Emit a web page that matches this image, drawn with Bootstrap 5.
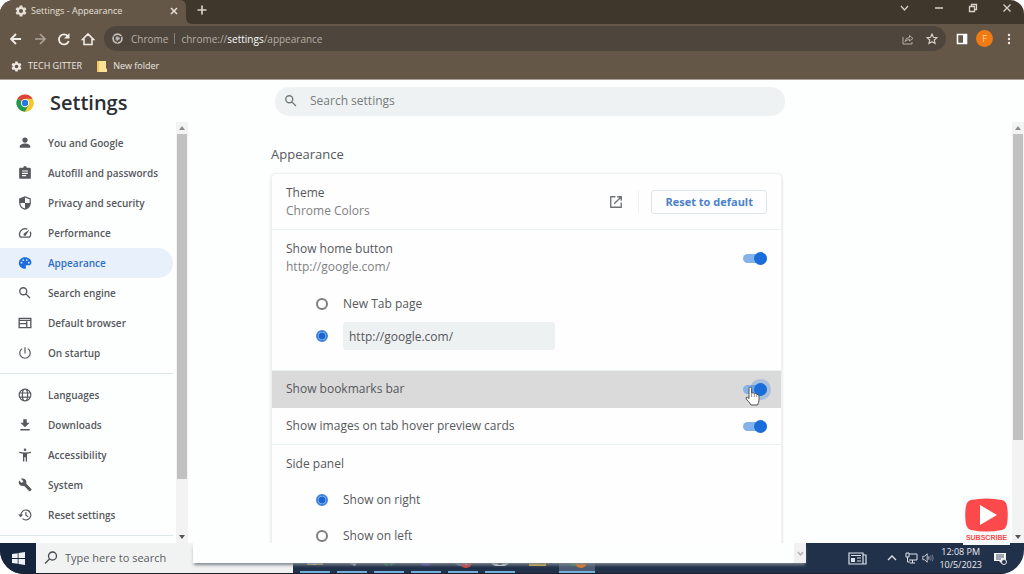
<!DOCTYPE html>
<html lang="en">
<head>
<meta charset="utf-8">
<meta name="viewport" content="width=device-width, initial-scale=1">
<title>Settings - Appearance</title>
<link href="https://cdn.jsdelivr.net/npm/bootstrap@5.3.0/dist/css/bootstrap.min.css" rel="stylesheet">
<style>
  body { font-family: "Open Sans", "Noto Sans", sans-serif; font-size: 12px; line-height: 18px; color: #55585c; background: #fff; }
  button { border: 0; background: none; padding: 0; color: inherit; line-height: 1; }
  svg { display: block; flex: none; }
  .screen { height: 100vh; border-radius: 14px 14px 24px 24px; background: #fdfefe; }

  /* Browser frame */
  .tabstrip { height: 24px; background: #40372c; color: #d8d2ca; }
  .tab { width: 186px; background: #655748; border-radius: 0 6px 0 0; padding: 0 8px 2px 15px; font-size: 9px; color: #e6e0d8; }
  .tab-edge { width: 6px; background: #655748; }
  .tab-edge::before { content: ""; display: block; height: 100%; background: #40372c; border-radius: 0 0 0 6px; }
  .window-buttons { gap: 24px; padding-right: 12px; }
  .toolbar { height: 31px; background: #655748; color: #efebe5; padding: 0 13px 2px 8px; }
  .address { height: 25px; background: #4e463c; border-radius: 13px; padding: 0 8px; font-size: 10px; color: #b5aea4; }
  .address-rule { width: 1px; height: 11px; background: #887e71; margin: 0 6px; }
  .share { margin-right: 12px; }
  .panel-toggle { margin-left: 10px; }
  .kebab { margin-left: 14px; }
  .bookmarks { height: 25px; background: #655748; padding: 0 11px 2px; gap: 15px; font-size: 9px; border-bottom: 1px solid #a79f95; }
  .bookmarks a { color: #ece7e0; gap: 6px; }
  .avatar { width: 17px; height: 17px; background: #f07a13; color: #fbd9a4; font-size: 9px; }

  /* Settings page */
  .page-head { height: 42px; }
  .brand { width: 188px; padding: 3px 0 0 16px; }
  .brand h1 { font-size: 20px; line-height: 28px; font-weight: 600; color: #2b2f34; }
  .searchbox { height: 29px; max-width: 510px; margin: 0 16px 0 87px; background: #eef2f2; border-radius: 15px; padding: 0 9px; }
  .searchbox input { font-size: 12px; color: #6b6f73; }
  .searchbox input::placeholder { color: #777b7e; opacity: 1; }
  .sidebar { width: 188px; }
  .side-nav { padding-top: 6px; margin-right: 3px; }
  .side-nav a { height: 30px; padding-left: 18px; gap: 16px; font-size: 10px; font-weight: 600; color: #55585c; text-decoration: none; }
  .side-nav a.active { color: #2e6fc4; background: #e8f0fc; border-radius: 0 15px 15px 0; }
  .side-nav a.active svg { color: #1a6edb; }
  .side-nav hr { margin: 5px 0 6px; border-color: #dbe8ea; opacity: 1; }
  .scroller { width: 12px; background: #f3f3f3; flex: none; color: #8c8c8c; }
  .scroller button { height: 12px; display: flex; align-items: center; justify-content: center; }
  .thumb { background: #c1c1c1; margin: 0 1px; }
  .side-thumb { flex: 0 0 87%; }
  .main-thumb { flex: 0 0 77%; }

  .settings-main { padding: 0 16px 0 83px; }
  .settings-main h2 { font-size: 13px; line-height: 18px; margin: 23px 0 10px; color: #55585c; }
  .panel { max-width: 511px; border: 1px solid #edf1f1; border-radius: 5px; box-shadow: 0 1px 3px #d5dcdc; background: #fefefe; }
  .panel-row { padding: 0 14px; border-bottom: 1px solid #eaf1f1; min-height: 37px; }
  .row-theme { min-height: 56px; }
  .row-home { padding-bottom: 20px; }
  .row-side { padding-top: 1px; }
  .row-hover { background: #dadada; border-color: #dadada; }
  .muted { color: #7e8184; }
  .reset { height: 24px; padding: 0 13px; border: 1px solid #dfe6ea; border-radius: 3px; font-size: 11px; font-weight: 700; color: #4a82c9; background: #fefefe; }
  .rule { width: 1px; height: 22px; background: #e9f1f1; margin: 0 12px 0 15px; }
  .choice { padding-left: 30px; gap: 15px; }
  .choice-home { height: 28px; }
  .choice-home + .choice-home { margin-top: 4px; }
  .choice-side { height: 36px; }
  .url-field { width: 212px; height: 28px; border: 0; border-radius: 3px; background: #eef1f1; padding: 0 6px; font-size: 12px; color: #55585c; }
  input[type=radio] { appearance: none; width: 12px; height: 12px; margin: 0; border: 2px solid #7b7d80; border-radius: 50%; flex: none; }
  input[type=radio]:checked { border-color: #3d84dd; background: radial-gradient(circle, #1a66cf 0 3px, #a9cbf5 4px); }
  .toggle { appearance: none; position: relative; width: 24px; height: 9px; margin: 0; border-radius: 5px; background: #86b2ec; flex: none; }
  .toggle::before { content: ""; position: absolute; right: 0; top: -2px; width: 13px; height: 13px; border-radius: 50%; background: #1a6edb; }
  .row-hover .toggle::before { box-shadow: 0 0 0 4px #1a6edb40; }
  .hand { position: absolute; right: 21px; top: 15px; }

  .subscribe { position: absolute; right: 14px; bottom: -2px; width: 47px; padding: 2px 0 1px; background: #f7fafa; color: #fb4a4b; font-family: "Liberation Sans", sans-serif; font-size: 7px; line-height: 12px; font-weight: 700; z-index: 1; }

  /* Windows taskbar */
  .taskbar { height: 31px; background: #22314a; border-bottom: 1px solid #1a1f29; color: #dde2e8; }
  .start { width: 36px; background: #14253d; }
  .task-search { width: 257px; background: #f1f2f2; padding: 0 8px; gap: 7px; color: #45494e; }
  .task-search input { font-size: 11px; color: #5a5d61; }
  .task-search input::placeholder { color: #5a5d61; opacity: 1; }
  .apps { padding-left: 7px; gap: 7px; }
  .apps button { width: 30px; border-bottom: 2px solid #72aedb; display: flex; justify-content: center; padding-top: 7px; }
  .apps .idle { border-color: transparent; }
  .apps .current { width: 36px; background: #4c5b70; }
  .sheet { position: absolute; left: 193px; top: 0; width: 613px; height: 20px; background: #fdfefe; box-shadow: 0 3px 3px -1px #7d858e; }
  .sheet button { width: 12px; background: #f1f1f1; color: #b4b4b4; }
  .tray { padding-right: 17px; }
  .clock { font-size: 9px; line-height: 13px; color: #e9ecf0; margin: 0 12px 0 5px; }
</style>
</head>
<body>
<svg class="d-none" aria-hidden="true">
  <symbol id="gear" viewBox="0 0 24 24"><path fill="currentColor" fill-rule="evenodd" d="M9.500 1h5l.7 3.200 2 1.100 3-1 2.600 4.400-2.400 2.200v2.200l2.400 2.200-2.600 4.400-3-1-2 1.100-.7 3.200h-5l-.7-3.200-2-1.100-3 1-2.600-4.400 2.400-2.200v-2.200L1.200 8.700 3.800 4.300l3 1 2-1.100zM12 8a4 4 0 1 0 0 8 4 4 0 0 0 0-8z"/></symbol>
  <symbol id="search" viewBox="0 0 24 24"><path fill="none" stroke="currentColor" stroke-width="2.300" d="M15 9a6 6 0 1 1-12 0 6 6 0 0 1 12 0zM13.500 13.500l7 7"/></symbol>
</svg>

<div class="screen d-flex flex-column overflow-hidden">
  <header>
    <div class="tabstrip d-flex">
      <div class="tab d-flex align-items-center">
        <svg width="12" height="12" class="me-1"><use href="#gear"/></svg>
        <span class="flex-grow-1">Settings - Appearance</span>
        <button aria-label="Close tab"><svg width="8" height="8" viewBox="0 0 8 8"><path d="M1 1l6 6M7 1L1 7" stroke="currentColor" stroke-width="1.500"/></svg></button>
      </div>
      <div class="tab-edge"></div>
      <button class="ms-1 pb-1" aria-label="New tab"><svg width="12" height="12" viewBox="0 0 12 12"><path d="M6 1.500v9M1.500 6h9" stroke="currentColor" stroke-width="1.700"/></svg></button>
      <div class="window-buttons d-flex align-items-center ms-auto pb-2">
        <button aria-label="Search tabs"><svg width="11" height="10" viewBox="0 0 11 10"><path d="M2 3l3.500 4L9 3" fill="none" stroke="currentColor" stroke-width="1.200"/></svg></button>
        <button aria-label="Minimize"><svg width="10" height="10" viewBox="0 0 10 10"><path d="M1 5h8" stroke="currentColor" stroke-width="1.300"/></svg></button>
        <button aria-label="Restore"><svg width="10" height="10" viewBox="0 0 10 10"><path d="M1.500 3.500h5v5h-5zM3.500 3V1.500h5v5H7" fill="none" stroke="currentColor" stroke-width="1.300"/></svg></button>
        <button aria-label="Close"><svg width="10" height="10" viewBox="0 0 10 10"><path d="M1.500 1.500l7 7M8.500 1.500l-7 7" stroke="currentColor" stroke-width="1.300"/></svg></button>
      </div>
    </div>
    <div class="toolbar d-flex align-items-center">
      <button class="me-2" aria-label="Back"><svg width="16" height="14" viewBox="0 0 16 14"><path d="M13 7H3M8 2L3 7l5 5" fill="none" stroke="currentColor" stroke-width="1.800"/></svg></button>
      <button class="me-2 opacity-50" aria-label="Forward"><svg width="16" height="14" viewBox="0 0 16 14"><path d="M3 7h10M8 2l5 5-5 5" fill="none" stroke="currentColor" stroke-width="1.700"/></svg></button>
      <button class="me-2" aria-label="Reload"><svg width="16" height="14" viewBox="0 0 16 14"><path d="M12 4.500A5 5 0 1 0 12.700 9" fill="none" stroke="currentColor" stroke-width="1.800"/><path d="M13.500 1v5.500H8z" fill="currentColor"/></svg></button>
      <button class="me-2" aria-label="Home"><svg width="16" height="14" viewBox="0 0 16 14"><path d="M2.500 7.500L8 2l5.500 5.500H12V12.500H4V7.500z" fill="none" stroke="currentColor" stroke-width="1.600"/></svg></button>
      <div class="address flex-grow-1 d-flex align-items-center">
        <svg width="11" height="11" viewBox="0 0 12 12"><g fill="none" stroke="#c9c3ba"><circle cx="6" cy="6" r="4.800" stroke-width="1.800"/><circle cx="6" cy="6" r="2" fill="#aeb5c5" stroke-width="1"/><path d="M6 4h5M4.300 7L1.800 3M7.700 7L5.500 11" stroke="#4e463c"/></g></svg>
        <span class="ms-2">Chrome</span><span class="address-rule"></span>
        <span class="flex-grow-1">chrome://<b class="fw-normal text-light">settings</b>/appearance</span>
        <button class="share" aria-label="Share"><svg width="12" height="12" viewBox="0 0 12 12"><path d="M1 4v7h9V9M3 8.500Q3.500 4.500 7.500 4.500V2.500L11 5.500 7.500 8V6.500Q5 6.500 3 8.500z" fill="none" stroke="currentColor"/></svg></button>
        <button aria-label="Bookmark"><svg width="12" height="12" viewBox="0 0 12 12"><path d="M6 1l1.400 3.300 3.600.3-2.700 2.400.8 3.500L6 8.700l-3.100 1.800.8-3.500L1 4.600l3.600-.3z" fill="none" stroke="#dcd6cd" stroke-width="1.100"/></svg></button>
      </div>
      <button class="panel-toggle" aria-label="Side panel"><svg width="12" height="12" viewBox="0 0 12 12"><path d="M1.500 1.500h9v9h-9z" fill="none" stroke="#fff" stroke-width="1.600"/><path d="M7 1h4v10H7z" fill="#fff"/></svg></button>
      <button class="avatar rounded-circle ms-2" aria-label="Profile">F</button>
      <button class="kebab" aria-label="Menu"><svg width="4" height="12" viewBox="0 0 4 12" fill="currentColor"><circle cx="2" cy="2" r="1.200"/><circle cx="2" cy="6" r="1.200"/><circle cx="2" cy="10" r="1.200"/></svg></button>
    </div>
    <nav class="bookmarks d-flex align-items-center">
      <a class="d-flex align-items-center text-decoration-none" href="#"><svg width="11" height="11"><use href="#gear"/></svg>TECH GITTER</a>
      <a class="d-flex align-items-center text-decoration-none" href="#"><svg width="10" height="12" viewBox="0 0 10 12"><path d="M0 1h9v7l1 1v3H0z" fill="#fbe194"/><path d="M0 1h2v11H0z" fill="#f6c65b"/></svg>New folder</a>
    </nav>
  </header>

  <div class="page-head d-flex align-items-center flex-shrink-0">
    <div class="brand d-flex align-items-center gap-3 flex-shrink-0">
      <svg width="18" height="18" viewBox="0 0 48 48"><circle cx="24" cy="24" r="23" fill="#f6c62d"/><path d="M24 24L4.100 12.500A23 23 0 0 1 43.900 12.500H24z" fill="#dc4437"/><path d="M24 24L4.100 12.500A23 23 0 0 0 24 47L34 29.500z" fill="#219a55"/><path d="M24 13h20.200A23 23 0 0 1 24 47l9.800-17z" fill="#f6c62d"/><circle cx="24" cy="24" r="11" fill="#fff"/><circle cx="24" cy="24" r="8.500" fill="#2877e0"/></svg>
      <h1 class="m-0">Settings</h1>
    </div>
    <label class="searchbox d-flex align-items-center flex-grow-1">
      <svg width="14" height="14" color="#737779"><use href="#search"/></svg>
      <input class="border-0 bg-transparent w-100 ms-2 p-0 ps-1" type="search" placeholder="Search settings" aria-label="Search settings">
    </label>
  </div>

  <div class="d-flex flex-grow-1 position-relative overflow-visible" style="min-height:0">
    <aside class="sidebar d-flex flex-shrink-0">
      <nav class="side-nav flex-grow-1 overflow-hidden">
        <a class="d-flex align-items-center" href="#"><svg width="14" height="14" viewBox="0 0 24 24" fill="currentColor"><circle cx="12" cy="7" r="4.500"/><path d="M3 20v-2c0-3 5-5 9-5s9 2 9 5v2z"/></svg>You and Google</a>
        <a class="d-flex align-items-center" href="#"><svg width="14" height="14" viewBox="0 0 24 24" fill="currentColor"><path fill-rule="evenodd" d="M4 3h5a3 3 0 0 1 6 0h5q2 0 2 2v15q0 2-2 2H4q-2 0-2-2V5q0-2 2-2zM7 7.500v2h10v-2zM7 11.500v2h10v-2zM7 15.500v2h7v-2z"/></svg>Autofill and passwords</a>
        <a class="d-flex align-items-center" href="#"><svg width="14" height="14" viewBox="0 0 24 24"><path d="M12 1.500l9 3.500v7c0 5-4 9-9 10.500C7 21 3 17 3 12V5z" fill="none" stroke="currentColor" stroke-width="2"/><path d="M12 2v10H3V5zM12 12h9c0 5-4 9-9 10z" fill="currentColor"/></svg>Privacy and security</a>
        <a class="d-flex align-items-center" href="#"><svg width="14" height="14" viewBox="0 0 24 24"><path d="M16 5.500A9.500 9.500 0 0 0 4 19h16a9.500 9.500 0 0 0 1-9" fill="none" stroke="currentColor" stroke-width="2.200"/><path d="M20 6l-6.500 10a2.200 2.200 0 0 1-3.500-3z" fill="currentColor"/></svg>Performance</a>
        <a class="active d-flex align-items-center" href="#" aria-current="page"><svg width="14" height="14" viewBox="0 0 24 24"><path fill="currentColor" fill-rule="evenodd" d="M12 2C6 2 1.500 6.500 1.500 12S6 22 12 22c2 0 2.500-2 1.500-3-1-1.500 0-3 1.500-3h3c3 0 5-2 5-5 0-5-5-9-11-9zM6 10a1.500 1.500 0 1 1 0 3 1.500 1.500 0 0 1 0-3zM9 5.500a1.500 1.500 0 1 1 0 3 1.500 1.500 0 0 1 0-3zM15 5.500a1.500 1.500 0 1 1 0 3 1.500 1.500 0 0 1 0-3zM18.500 10a1.500 1.500 0 1 1 0 3 1.500 1.500 0 0 1 0-3z"/></svg>Appearance</a>
        <a class="d-flex align-items-center" href="#"><svg width="14" height="14"><use href="#search"/></svg>Search engine</a>
        <a class="d-flex align-items-center" href="#"><svg width="14" height="14" viewBox="0 0 24 24"><path d="M2 4h20v16H2zM2 7.500h20M2 13h13M15 9v11" fill="none" stroke="currentColor" stroke-width="2.300"/></svg>Default browser</a>
        <a class="d-flex align-items-center" href="#"><svg width="14" height="14" viewBox="0 0 24 24"><path d="M12 2v11M7 4.500a9 9 0 1 0 10 0" fill="none" stroke="currentColor" stroke-width="2"/></svg>On startup</a>
        <hr>
        <a class="d-flex align-items-center" href="#"><svg width="14" height="14" viewBox="0 0 24 24"><path d="M22 12a10 10 0 1 1-20 0 10 10 0 0 1 20 0zM16.500 12c0 6-2 10-4.500 10S7.500 18 7.500 12 9.500 2 12 2s4.500 4 4.500 10zM3 8.500h18M3 15.500h18" fill="none" stroke="currentColor" stroke-width="2"/></svg>Languages</a>
        <a class="d-flex align-items-center" href="#"><svg width="14" height="14" viewBox="0 0 24 24" fill="currentColor"><path d="M9 2h6v6h5l-8 8-8-8h5zM4 19h16v2.500H4z"/></svg>Downloads</a>
        <a class="d-flex align-items-center" href="#"><svg width="14" height="14" viewBox="0 0 24 24" fill="currentColor"><circle cx="12" cy="3" r="2.200"/><path d="M2 6.500q10 2.500 20 0v2.200l-6.500 1V23h-2.300v-7h-2.400v7H8.500V9.700L2 8.700z"/></svg>Accessibility</a>
        <a class="d-flex align-items-center" href="#"><svg width="14" height="14" viewBox="0 0 24 24" fill="currentColor"><path d="M23 19l-9-9.500c1-2.500.3-5-1.500-7C10.500.5 7.500.2 5 1.300L9.300 5.600 6.300 8.600 1.900 4.300C.8 6.700 1.200 9.800 3.200 11.800c1.900 1.900 4.600 2.400 7 1.500l9.200 9.200c.4.4 1 .4 1.400 0l2.300-2.300c.4-.3.4-.9-.1-1.200z"/></svg>System</a>
        <a class="d-flex align-items-center" href="#"><svg width="14" height="14" viewBox="0 0 24 24"><path d="M5 12a8.500 8.500 0 1 1 2.800 6.300M13.500 7v5.500l4 2.500" fill="none" stroke="currentColor" stroke-width="2"/><path d="M0 11h9l-4.500 5z" fill="currentColor"/></svg>Reset settings</a>
        <hr>
      </nav>
      <div class="scroller d-flex flex-column">
        <button aria-label="Scroll menu up"><svg width="6" height="4"><path d="M0 4l3-4 3 4z" fill="currentColor"/></svg></button>
        <div class="flex-grow-1 d-flex flex-column"><div class="thumb side-thumb"></div></div>
        <button aria-label="Scroll menu down"><svg width="6" height="4"><path d="M0 0l3 4 3-4z" fill="#555"/></svg></button>
      </div>
    </aside>

    <main class="settings-main flex-grow-1 overflow-hidden">
      <h2>Appearance</h2>
      <section class="panel">
        <div class="panel-row row-theme d-flex align-items-center">
          <div class="flex-grow-1">Theme<div class="muted">Chrome Colors</div></div>
          <button aria-label="Open theme store"><svg width="14" height="14" viewBox="0 0 24 24"><path d="M11 3H3v18h18v-8M14 3h7v7M21 3L9 15" fill="none" stroke="#6f7275" stroke-width="2.300"/></svg></button>
          <span class="rule"></span>
          <button class="reset">Reset to default</button>
        </div>
        <div class="panel-row row-home">
          <div class="row-theme d-flex align-items-center mb-1">
            <label class="flex-grow-1" for="home">Show home button<span class="d-block muted">http://google.com/</span></label>
            <input class="toggle" id="home" type="checkbox" role="switch" checked>
          </div>
          <div class="choice choice-home d-flex align-items-center"><input type="radio" name="homepage" id="newtab"><label for="newtab">New Tab page</label></div>
          <div class="choice choice-home d-flex align-items-center"><input type="radio" name="homepage" id="custom" checked aria-label="Custom address"><input class="url-field" type="text" value="http://google.com/" aria-label="Home page address"></div>
        </div>
        <div class="panel-row row-hover d-flex align-items-center position-relative">
          <label class="flex-grow-1" for="bar">Show bookmarks bar</label>
          <input class="toggle" id="bar" type="checkbox" role="switch" checked>
          <svg class="hand" width="15" height="20" viewBox="0 0 15 20"><path d="M4 11V2.500Q4 1 5.300 1T6.600 2.500V7q2.500-.7 2.700.6 2-.4 2.400.8Q14 8 14 10v4q0 2-1.500 5H6Q4 15.500 1.200 13 .5 11 2.500 11.200L4 12.500z" fill="#fff" stroke="#4e5155"/><path d="M6.600 7v4M9.300 8v3M11.700 8.500V11" stroke="#777" stroke-width=".8"/></svg>
        </div>
        <div class="panel-row d-flex align-items-center">
          <label class="flex-grow-1" for="previews">Show images on tab hover preview cards</label>
          <input class="toggle" id="previews" type="checkbox" role="switch" checked>
        </div>
        <div class="panel-row row-side">
          <div class="choice-side d-flex align-items-center">Side panel</div>
          <div class="choice choice-side d-flex align-items-center"><input type="radio" name="side" id="right" checked><label for="right">Show on right</label></div>
          <div class="choice choice-side d-flex align-items-center"><input type="radio" name="side" id="left"><label for="left">Show on left</label></div>
        </div>
      </section>
    </main>
    <div class="scroller d-flex flex-column">
      <button aria-label="Scroll up"><svg width="6" height="4"><path d="M0 4l3-4 3 4z" fill="currentColor"/></svg></button>
      <div class="flex-grow-1 d-flex flex-column"><div class="thumb main-thumb"></div></div>
      <button aria-label="Scroll down"><svg width="6" height="4"><path d="M0 0l3 4 3-4z" fill="#555"/></svg></button>
    </div>
    <div class="subscribe text-center">
      <svg class="mx-auto" width="43" height="34" viewBox="0 0 43 34"><path d="M6 2Q21 -1 37 2q4 1 5 6 1.500 9 0 18-1 5-5 6-16 3-31 0-4-1-5-6-1.500-9 0-18 1-5 5-6z" fill="#fc494b"/><path d="M15 7v20l17-10z" fill="#fff"/></svg>SUBSCRIBE
    </div>
  </div>

  <footer class="taskbar d-flex flex-shrink-0 position-relative">
    <button class="start d-flex align-items-center justify-content-center" aria-label="Start"><svg width="13" height="13" viewBox="0 0 13 13" fill="#eef2f6"><path d="M0 2l5.700-.8V6H0zM6.500 1L13 0v6H6.500zM0 7h5.700v4.800L0 11zM6.500 7H13v6l-6.500-1z"/></svg></button>
    <label class="task-search d-flex align-items-center">
      <svg width="14" height="14" viewBox="0 0 14 14"><circle cx="8.500" cy="5" r="4" fill="none" stroke="currentColor" stroke-width="1.300"/><path d="M5.500 8L1 12.500" stroke="currentColor" stroke-width="1.300"/></svg>
      <input class="border-0 bg-transparent p-0 w-50" type="text" placeholder="Type here to search" aria-label="Type here to search">
    </label>
    <div class="apps d-flex">
      <button aria-label="Store"><svg width="16" height="16"><path d="M0 2h16v13H0z" fill="#d8dde0"/><path d="M0 14h6v1H0zM9 14h7v1H9z" fill="#e49b31"/></svg></button>
      <button aria-label="Mail"><svg width="16" height="16"><path d="M2 3h12v8l-3 5-9-4z" fill="#b6c4cf"/></svg></button>
      <button aria-label="Call"><svg width="16" height="16"><circle cx="8" cy="8" r="8" fill="#25824d"/><path d="M6 12l3 4" stroke="#123f3b" stroke-width="2"/></svg></button>
      <button aria-label="Music"><svg width="16" height="16"><circle cx="8" cy="8" r="8" fill="#5838ca"/></svg></button>
      <button aria-label="Alerts"><svg width="20" height="18"><circle cx="8" cy="8" r="8" fill="#478bb6"/><circle cx="13" cy="12" r="6" fill="#d7413b"/><path d="M13 9v6" stroke="#fff"/></svg></button>
      <button aria-label="Camera"><svg width="18" height="16"><rect width="18" height="16" rx="5" fill="#e8ebed"/><circle cx="9" cy="12" r="3" fill="#343d49"/></svg></button>
      <button class="idle" aria-label="Files"><svg width="17" height="16"><path d="M0 2h17v14H0z" fill="#e5b536"/><path d="M10 12h5v2h-5z" fill="#8e742b"/></svg></button>
      <button class="current" aria-label="Browser"><svg width="22" height="18"><circle cx="8" cy="8" r="8" fill="#3b9452"/><circle cx="15" cy="12" r="6" fill="#ee7621"/></svg></button>
    </div>
    <div class="tray ms-auto d-flex align-items-center">
      <svg class="me-3" width="19" height="13" viewBox="0 0 19 13"><path d="M1 1h14v11H1zM15 3h3v9h-3M3 3.500h10M9 6h4M9 9h4" fill="none" stroke="currentColor" stroke-width="1.200"/><path d="M3 6h4v4H3z" fill="currentColor"/></svg>
      <svg class="ms-1 me-2" width="10" height="8" viewBox="0 0 10 8"><path d="M1 6l4-4 4 4" fill="none" stroke="currentColor" stroke-width="1.300"/></svg>
      <svg class="me-1" width="13" height="12" viewBox="0 0 13 12"><path d="M4 2h8v6H4M5 11h5M7.500 8v3M1 1h3v4H1zM2.500 5v5H5" fill="none" stroke="currentColor"/></svg>
      <svg width="12" height="12" viewBox="0 0 14 12"><path d="M1 4h2l3-3v10L3 8H1zM8 4v4" fill="none" stroke="currentColor"/><path d="M10 3q1.500 3 0 6M12 2q2 4 0 8" fill="none" stroke="#7c8897"/></svg>
      <div class="clock text-center">12:08 PM<br>10/5/2023</div>
      <svg width="13" height="13" viewBox="0 0 13 13"><path d="M0 1h12v8H8v3L5 9H0z" fill="#f1f3f5"/><path d="M2 3h8M2 5h8M2 7h5" stroke="#22314a" stroke-width=".8"/><circle cx="10" cy="10" r="2.500" fill="#22314a" stroke="#dfe3e8"/></svg>
    </div>
    <div class="sheet d-flex justify-content-end"><button class="d-flex align-items-center justify-content-center" aria-label="Scroll down"><svg width="7" height="5"><path d="M1 1l2.500 3L6 1" fill="none" stroke="currentColor" stroke-width="1.500"/></svg></button></div>
  </footer>
</div>
<script src="https://cdn.jsdelivr.net/npm/bootstrap@5.3.0/dist/js/bootstrap.bundle.min.js"></script>
</body>
</html>
